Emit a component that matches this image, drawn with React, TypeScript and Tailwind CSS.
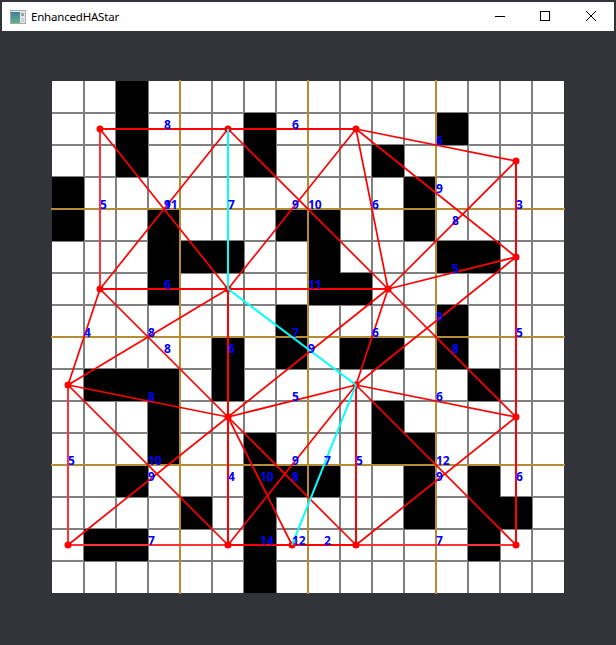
const blackCells: Record<number, number[]> = {
  0: [2],
  1: [2, 6, 12],
  2: [2, 6, 10],
  3: [0, 11],
  4: [0, 3, 7, 8, 11],
  5: [3, 4, 5, 8, 12, 13],
  6: [3, 8, 9],
  7: [7, 12],
  8: [5, 7, 9, 10, 12],
  9: [1, 2, 3, 5, 13],
  10: [3, 10],
  11: [3, 6, 10, 11],
  12: [2, 6, 7, 8, 11, 13],
  13: [4, 6, 11, 13, 14],
  14: [1, 2, 6, 13],
  15: [6],
};

// board-relative coords, board starts at (52, 81) on the page
type Pt = [number, number];
const p = (x: number, y: number): Pt => [x - 52, y - 81];

const nodes: Pt[] = [
  p(100, 129), p(228, 129), p(356, 129), p(516, 161),
  p(100, 289), p(228, 289), p(388, 289), p(516, 257),
  p(68, 385), p(356, 385), p(228, 417), p(516, 417),
  p(68, 545), p(228, 545), p(292, 545), p(356, 545), p(516, 545),
];

// [x1, y1, x2, y2, cost]
const edges: [number, number, number, number, string][] = [
  [100, 129, 228, 129, '8'],
  [228, 129, 356, 129, '6'],
  [356, 129, 516, 161, '6'],
  [100, 129, 100, 289, '5'],
  [228, 129, 100, 289, '11'],
  [100, 129, 228, 289, '9'],
  [228, 129, 388, 289, '10'],
  [356, 129, 228, 289, '9'],
  [356, 129, 388, 289, '6'],
  [356, 129, 516, 257, '9'],
  [516, 161, 388, 289, '8'],
  [516, 161, 516, 257, '3'],
  [388, 289, 516, 257, '5'],
  [100, 289, 228, 289, '6'],
  [228, 289, 388, 289, '11'],
  [100, 289, 68, 385, '4'],
  [68, 385, 228, 289, '8'],
  [100, 289, 228, 417, '8'],
  [228, 289, 228, 417, '6'],
  [388, 289, 228, 417, '9'],
  [388, 289, 356, 385, '6'],
  [516, 257, 356, 385, '9'],
  [388, 289, 516, 417, '8'],
  [516, 257, 516, 417, '5'],
  [68, 385, 228, 417, '8'],
  [228, 417, 356, 385, '5'],
  [356, 385, 516, 417, '6'],
  [68, 385, 68, 545, '5'],
  [68, 385, 228, 545, '10'],
  [228, 417, 68, 545, '9'],
  [228, 417, 228, 545, '4'],
  [228, 417, 292, 545, '10'],
  [228, 417, 356, 545, '8'],
  [356, 385, 228, 545, '9'],
  [356, 385, 356, 545, '5'],
  [356, 385, 516, 545, '12'],
  [516, 417, 356, 545, '9'],
  [516, 417, 516, 545, '6'],
  [68, 545, 228, 545, '7'],
  [228, 545, 292, 545, '14'],
  [292, 545, 356, 545, '2'],
  [228, 545, 356, 545, '12'],
  [356, 545, 516, 545, '7'],
];

// cyan path, with the cost of each leg
const path: [number, number, number, number, string][] = [
  [228, 129, 228, 289, '7'],
  [228, 289, 356, 385, '7'],
  [356, 385, 292, 545, '7'],
];

const goldLines = [128, 256, 384];

// these come out a bit paler in the reference
const isPale = (x1: number, y1: number, x2: number, y2: number) =>
  (x1 === x2 && (x1 === 100 || x1 === 68)) || (y1 === y2 && y1 === 545 && (x1 === 68 || x1 === 356));

const Cell = ({ row, col }: { row: number; col: number }) => {
  if (blackCells[row]?.includes(col)) return <div className="bg-black" />;
  return (
    <div
      className={`bg-white border-[#808080] ${col > 0 ? 'border-l' : ''} ${col < 15 ? 'border-r' : ''} ${row > 0 ? 'border-t' : ''} ${row < 15 ? 'border-b' : ''}`}
    />
  );
};

const Graph = () => (
  <svg className="absolute left-0 top-0 overflow-visible" width={512} height={512}>
    {goldLines.map((v) => (
      <g key={v} stroke="#b58b35" strokeWidth={2}>
        <line x1={v} y1={-1} x2={v} y2={513} />
        <line x1={-1} y1={v} x2={513} y2={v} />
      </g>
    ))}
    {edges.map(([x1, y1, x2, y2], i) => (
      <line
        key={i}
        x1={x1 - 52}
        y1={y1 - 81}
        x2={x2 - 52}
        y2={y2 - 81}
        stroke={isPale(x1, y1, x2, y2) ? '#ff3333' : '#ff0000'}
        strokeWidth={x1 === x2 || y1 === y2 ? 2 : 1.7}
      />
    ))}
    {nodes.map(([x, y], i) => (
      <circle key={i} cx={x} cy={y} r={3.5} fill="#ff0000" />
    ))}
    {path.map(([x1, y1, x2, y2], i) => (
      <line key={i} x1={x1 - 52} y1={y1 - 81} x2={x2 - 52} y2={y2 - 81} stroke="#00ffff" strokeWidth={2} />
    ))}
    {[...edges, ...path].map(([x1, y1, x2, y2, cost], i) => (
      <text
        key={i}
        x={(x1 + x2) / 2 - 52}
        y={(y1 + y2) / 2 - 81}
        fill="#0000ff"
        className="font-['Noto_Sans',sans-serif] text-[12px] font-bold"
      >
        {cost}
      </text>
    ))}
  </svg>
);

const AppIcon = () => (
  <svg width={16} height={14} viewBox="0 0 16 14">
    <defs>
      <linearGradient id="appIconFill" x1="0" y1="0" x2="0" y2="1">
        <stop offset="0" stopColor="#3f7f9f" />
        <stop offset="1" stopColor="#66b383" />
      </linearGradient>
    </defs>
    <rect x={0.5} y={0.5} width={15} height={13} fill="#e4e7e7" stroke="#a8a8a8" />
    <rect x={1} y={2} width={9} height={11} fill="url(#appIconFill)" />
    <rect x={11} y={3} width={3} height={3} fill="#9aa4a4" />
    <rect x={11} y={8} width={3} height={4} fill="#ccd0d0" />
  </svg>
);

const WindowButtons = () => (
  <div className="mb-[2px] flex items-center">
    <div className="flex h-[29px] w-[46px] items-center justify-center">
      <svg className="ml-[2px]" width={10} height={10} viewBox="0 0 10 10">
        <line x1={0} y1={5.5} x2={10} y2={5.5} stroke="#000" />
      </svg>
    </div>
    <div className="flex h-[29px] w-[46px] items-center justify-center">
      <svg width={10} height={10} viewBox="0 0 10 10">
        <rect x={0.5} y={0.5} width={9} height={9} fill="none" stroke="#000" />
      </svg>
    </div>
    <div className="flex h-[29px] w-[46px] items-center justify-center">
      <svg width={10} height={10} viewBox="0 0 10 10">
        <path d="M0 0L10 10M10 0L0 10" stroke="#000" fill="none" />
      </svg>
    </div>
  </div>
);

export default function App() {
  return (
    <div className="h-[645px] w-[616px] overflow-hidden bg-[#333439] p-[2px]">
      <div className="flex h-[29px] items-center justify-between bg-white pl-[8px]">
        <div className="flex items-center gap-[5px]">
          <AppIcon />
          <span className="font-['Noto_Sans',sans-serif] text-[11.5px] tracking-[-0.2px] text-black">EnhancedHAStar</span>
        </div>
        <WindowButtons />
      </div>
      <div className="relative ml-[50px] mt-[50px] h-[512px] w-[512px]">
        <div className="grid h-full w-full grid-cols-[repeat(16,32px)] grid-rows-[repeat(16,32px)]">
          {Array.from({ length: 16 }).flatMap((_, row) =>
            Array.from({ length: 16 }).map((_, col) => <Cell key={`${row}-${col}`} row={row} col={col} />)
          )}
        </div>
        <Graph />
      </div>
    </div>
  );
}
